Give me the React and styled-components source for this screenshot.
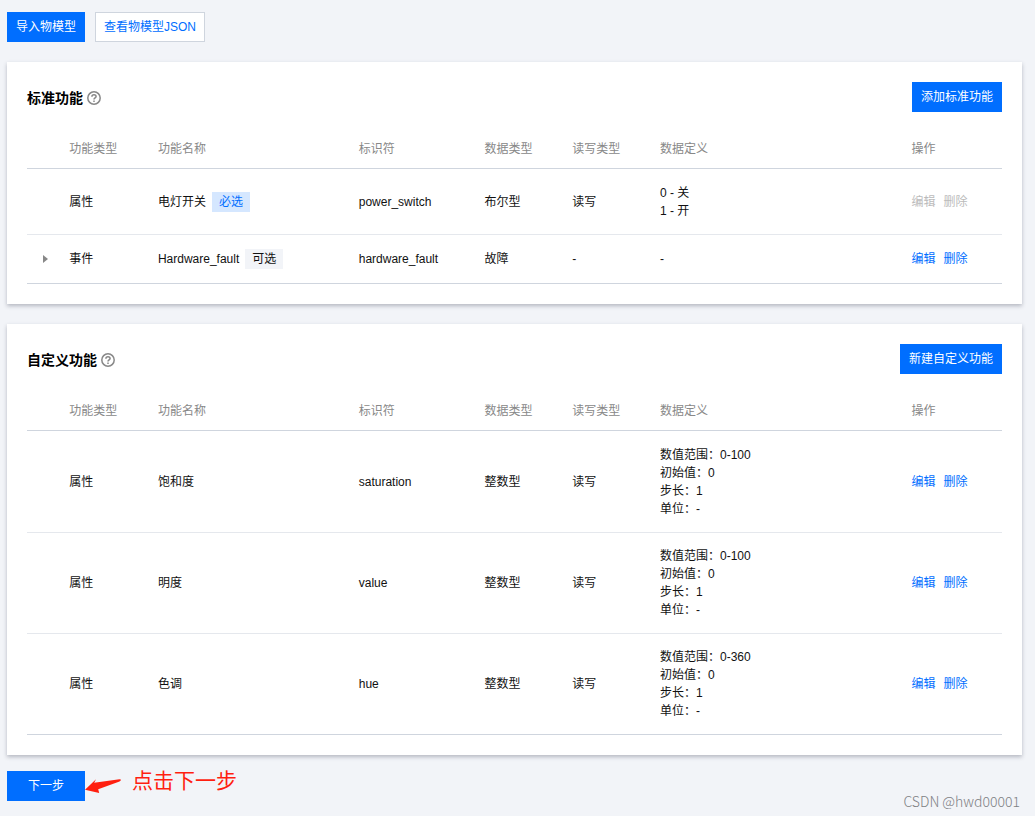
import React from "react";
import styled, { createGlobalStyle } from "styled-components";

const Color = {
  Primary: "#006eff",
  Page: "#f2f4f8",
  Text: "#111",
  Muted: "#888",
  Disabled: "#bbb",
  Line: "#cfd5de",
  RowLine: "#e5e8ed",
  Note: "#ff1f10"
};

const columns = [
  { title: "", width: "3.3%" },
  { title: "功能类型", width: "9.1%" },
  { title: "功能名称", width: "20.6%" },
  { title: "标识符", width: "12.9%" },
  { title: "数据类型", width: "9%" },
  { title: "读写类型", width: "9%" },
  { title: "数据定义", width: "25.8%" },
  { title: "操作", width: "10.3%" }
];

const standardRows = [
  {
    type: "属性",
    name: "电灯开关",
    tag: "必选",
    required: true,
    id: "power_switch",
    dataType: "布尔型",
    access: "读写",
    define: ["0 - 关", "1 - 开"],
    locked: true
  },
  {
    type: "事件",
    name: "Hardware_fault",
    tag: "可选",
    id: "hardware_fault",
    dataType: "故障",
    access: "-",
    define: ["-"],
    expandable: true
  }
];

const numberRow = (name, id, range) => ({
  type: "属性",
  name,
  id,
  dataType: "整数型",
  access: "读写",
  define: [`数值范围：${range}`, "初始值：0", "步长：1", "单位：-"]
});

const customRows = [
  numberRow("饱和度", "saturation", "0-100"),
  numberRow("明度", "value", "0-100"),
  numberRow("色调", "hue", "0-360")
];

const HelpIcon = () => (
  <svg width="14" height="14" viewBox="0 0 14 14" fill="none" stroke="#888">
    <circle cx="7" cy="7" r="6.2" strokeWidth="1.5" />
    <path d="M4.9 5.8C4.9 4.4 5.8 3.7 7 3.7s2.1.7 2.1 1.8c0 1.4-2.1 1.4-2.1 3" strokeWidth="1.5" />
    <path d="M7 9.4v1.5" strokeWidth="1.5" />
  </svg>
);

const FunctionCard = ({ title, action, rows }) => (
  <Card>
    <CardHead>
      <Title>
        {title}
        <HelpButton type="button" aria-label={`${title}说明`}>
          <HelpIcon />
        </HelpButton>
      </Title>
      <Button type="button">{action}</Button>
    </CardHead>
    <Table>
      <colgroup>
        {columns.map((col, i) => (
          <Col key={i} $width={col.width} />
        ))}
      </colgroup>
      <thead>
        <tr>
          {columns.map((col, i) => (
            <Th key={i}>{col.title}</Th>
          ))}
        </tr>
      </thead>
      <tbody>
        {rows.map(row => (
          <Row key={row.id}>
            <ExpandCell>
              {row.expandable && (
                <Expand type="button" aria-label="展开">
                  <svg width="5" height="8" viewBox="0 0 5 8">
                    <path d="M0 0L5 4L0 8Z" fill="#888" />
                  </svg>
                </Expand>
              )}
            </ExpandCell>
            <Td>{row.type}</Td>
            <Td>
              <Name>
                {row.name}
                {row.tag && <Tag $required={row.required}>{row.tag}</Tag>}
              </Name>
            </Td>
            <Td>{row.id}</Td>
            <Td>{row.dataType}</Td>
            <Td>{row.access}</Td>
            <Td>
              {row.define.map(line => (
                <div key={line}>{line}</div>
              ))}
            </Td>
            <Td>
              <Actions>
                <TextButton type="button" disabled={row.locked}>
                  编辑
                </TextButton>
                <TextButton type="button" disabled={row.locked}>
                  删除
                </TextButton>
              </Actions>
            </Td>
          </Row>
        ))}
      </tbody>
    </Table>
  </Card>
);

const App = () => (
  <Page>
    <GlobalStyle />
    <Toolbar>
      <Button type="button">导入物模型</Button>
      <OutlineButton type="button">查看物模型JSON</OutlineButton>
    </Toolbar>
    <FunctionCard title="标准功能" action="添加标准功能" rows={standardRows} />
    <FunctionCard title="自定义功能" action="新建自定义功能" rows={customRows} />
    <Footer>
      <NextButton type="button">下一步</NextButton>
      <svg width="37" height="16" viewBox="0 0 37 16">
        <path
          d="M0 11.8L11 1.2L9.2 4.8L34.5 1.2Q37.5 1.8 34.5 3.4L13.2 11.2L14.2 15Z"
          fill={Color.Note}
        />
      </svg>
      <Note>点击下一步</Note>
    </Footer>
    <Watermark>CSDN @hwd00001</Watermark>
  </Page>
);

export default App;

const GlobalStyle = createGlobalStyle`
  * {
    box-sizing: border-box;
  }
  body {
    margin: 0;
    background: ${Color.Page};
    color: ${Color.Text};
    font: 12px/18px "Liberation Sans", "Noto Sans CJK SC", sans-serif;
  }
  button {
    font: inherit;
    cursor: pointer;
  }
  svg {
    display: block;
  }
`;

const Page = styled.main`
  position: relative;
  min-height: 100vh;
  padding: 12px 13px 15px 7px;
`;

const Toolbar = styled.div`
  display: flex;
  gap: 10px;
`;

const Button = styled.button`
  height: 30px;
  padding: 0 8px;
  border: 1px solid ${Color.Primary};
  background: ${Color.Primary};
  color: #fff;
  white-space: nowrap;
`;

const OutlineButton = styled(Button)`
  border-color: ${Color.Line};
  background: #fff;
  color: ${Color.Primary};
`;

const NextButton = styled(Button)`
  padding: 0 20px;
`;

const Card = styled.section`
  margin-top: 20px;
  padding: 20px;
  background: #fff;
  box-shadow: 0 2px 4px rgba(54, 58, 80, 0.32);
`;

const CardHead = styled.div`
  display: flex;
  align-items: center;
  justify-content: space-between;
`;

const Title = styled.h2`
  display: flex;
  align-items: center;
  gap: 4px;
  margin: 0;
  padding-top: 2px;
  color: #000;
  font-size: 14px;
  font-weight: 700;
`;

const HelpButton = styled.button`
  padding: 0;
  border: 0;
  background: none;
`;

const Table = styled.table`
  width: 100%;
  margin-top: 16px;
  table-layout: fixed;
  border-spacing: 0;
`;

const Col = styled.col`
  width: ${props => props.$width};
`;

const Th = styled.th`
  padding: 12px 10px 10px;
  border-bottom: 1px solid ${Color.Line};
  color: ${Color.Muted};
  font-weight: 400;
  text-align: left;
`;

const Td = styled.td`
  padding: 14px 10px;
  border-bottom: 1px solid ${Color.RowLine};
  vertical-align: middle;
`;

const ExpandCell = styled(Td)`
  padding-left: 16px;
  padding-right: 0;
`;

const Row = styled.tr`
  &:first-child > td {
    padding-top: 15px;
  }
  &:last-child > td {
    border-bottom-color: ${Color.Line};
  }
`;

const Expand = styled.button`
  display: block;
  padding: 0;
  border: 0;
  background: none;
`;

const Name = styled.div`
  display: flex;
  align-items: center;
  gap: 6px;
`;

const Tag = styled.span`
  padding: 0 7px;
  background: ${props => (props.$required ? "#d5e7ff" : "#f2f4f8")};
  color: ${props => (props.$required ? Color.Primary : Color.Text)};
  line-height: 20px;
`;

const Actions = styled.div`
  display: flex;
  gap: 8px;
`;

const TextButton = styled.button`
  padding: 0;
  border: 0;
  background: none;
  color: ${Color.Primary};
  &:disabled {
    color: ${Color.Disabled};
    cursor: default;
  }
`;

const Footer = styled.div`
  display: flex;
  align-items: center;
  margin-top: 16px;
`;

const Note = styled.span`
  margin-left: 10px;
  padding-bottom: 10px;
  color: ${Color.Note};
  font-size: 21px;
  line-height: 20px;
`;

const Watermark = styled.span`
  position: absolute;
  right: 15px;
  bottom: 6px;
  color: #808184;
  font-family: "Noto Sans CJK SC", sans-serif;
  font-size: 14px;
  font-weight: 300;
`;
